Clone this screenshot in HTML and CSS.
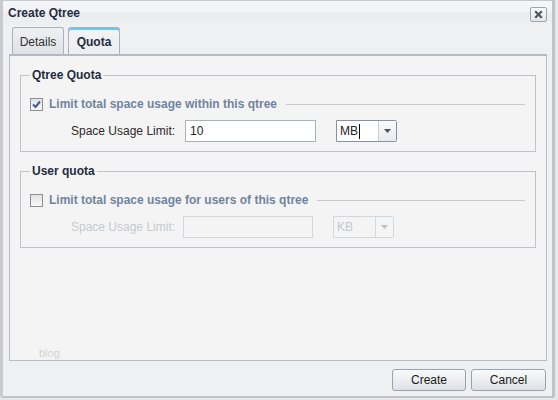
FILE: index.html
```html
<!DOCTYPE html>
<html>
<head>
<meta charset="utf-8">
<title>Create Qtree</title>
<link rel="stylesheet" href="styles.css">
</head>
<body>
<div class="window">
  <div class="titlebar">
    <span class="title">Create Qtree</span>
    <span class="close"><svg width="9" height="9" viewBox="0 0 9 9"><path d="M1.2 1.2 L7.8 7.8 M7.8 1.2 L1.2 7.8" stroke="#4f5761" stroke-width="2.2" fill="none"/></svg></span>
  </div>
  <div class="tabs">
    <div class="tab">Details</div>
    <div class="tab tab--active">Quota</div>
  </div>
  <div class="panel">
    <fieldset class="group">
      <legend>Qtree Quota</legend>
      <div class="check-row">
        <span class="checkbox"><svg width="11" height="11" viewBox="0 0 11 11"><path d="M2 5.5 L4.5 8 L9 2.5" stroke="#3f5d96" stroke-width="2" fill="none"/></svg></span>
        <span class="check-label">Limit total space usage within this qtree</span>
        <span class="rule"></span>
      </div>
      <div class="field-row">
        <span class="field-label">Space Usage Limit:</span>
        <div class="input">10</div>
        <div class="select select--focus">
          <span class="select-value">MB<span class="caret"></span></span>
          <span class="select-btn"><svg width="7" height="4" viewBox="0 0 7 4"><polygon points="0,0 7,0 3.5,4" fill="#4a5563"/></svg></span>
        </div>
      </div>
    </fieldset>
    <fieldset class="group group--disabled">
      <legend>User quota</legend>
      <div class="check-row">
        <span class="checkbox"></span>
        <span class="check-label">Limit total space usage for users of this qtree</span>
        <span class="rule"></span>
      </div>
      <div class="field-row">
        <span class="field-label">Space Usage Limit:</span>
        <div class="input"></div>
        <div class="select">
          <span class="select-value">KB</span>
          <span class="select-btn"><svg width="7" height="4" viewBox="0 0 7 4"><polygon points="0,0 7,0 3.5,4" fill="#b9bfc6"/></svg></span>
        </div>
      </div>
    </fieldset>
    <div class="watermark">blog</div>
  </div>
  <div class="actions">
    <span class="btn btn--create">Create</span>
    <span class="btn btn--cancel">Cancel</span>
  </div>
</div>
</body>
</html>
```
FILE: styles.css
```css
* { box-sizing: border-box; }
html, body { margin: 0; padding: 0; }
body {
  width: 558px;
  height: 400px;
  overflow: hidden;
  background: #e6e7e9;
  font-family: "Liberation Sans", Arial, sans-serif;
  font-size: 12px;
  color: #222;
}
.window {
  width: 555px;
  height: 398px;
  background: #eff0f2;
  border-top: 1px solid #c6c8cc;
  border-left: 3px solid #c9cacd;
  border-right: 3px solid #c0c2c6;
  border-bottom: 2px solid #c0c2c6;
  border-radius: 0 0 3px 3px;
  padding: 0 5px 0 6px;
  display: flex;
  flex-direction: column;
}
.titlebar {
  margin: 0 -5px 0 -6px;
  height: 26px;
  padding: 5px 5px 0 5px;
  display: flex;
  justify-content: space-between;
  align-items: flex-start;
  background: linear-gradient(#f6f7f8, #f2f3f5 40%, #eaecef 48%, #eff0f2);
}
.title {
  font-weight: bold;
  line-height: 14px;
  color: #1e2c3e;
}
.close {
  margin-top: 1px;
  width: 17px;
  height: 15px;
  border: 1px solid #9ea5ae;
  border-radius: 2px;
  background: linear-gradient(#f8f9fa, #e3e6ea);
  display: flex;
  align-items: center;
  justify-content: center;
}
.close svg { display: block; }
.tabs {
  height: 27px;
  display: flex;
  align-items: flex-end;
  gap: 4px;
  padding-left: 3px;
}
.tab {
  width: 52px;
  height: 27px;
  border: 1px solid #aab2bd;
  border-bottom: none;
  border-radius: 3px 3px 0 0;
  background: linear-gradient(#eef0f2, #dfe2e6);
  display: flex;
  align-items: center;
  justify-content: center;
  line-height: 14px;
  color: #333;
  padding-top: 1px;
}
.tab--active {
  font-weight: bold;
  color: #1e2c3e;
  background: linear-gradient(#f2f3f5, #eceef1);
  box-shadow: inset 0 2px 0 #6ac6ea;
}
.panel {
  height: 307px;
  border: 1px solid #b5bcc6;
  border-top: 2px solid #b3bac4;
  background: #f4f4f4;
  padding: 0 10px;
  display: flex;
  flex-direction: column;
}
.group {
  margin: 12px 0 0 0;
  padding: 0 10px 9px 9px;
  border: 1px solid #bdc3cb;
  min-width: 0;
}
.group legend {
  padding: 0 2px;
  line-height: 14px;
  font-weight: bold;
  color: #1e2c3e;
}
.check-row {
  margin-top: 14px;
  height: 16px;
  display: flex;
  align-items: center;
}
.checkbox {
  width: 13px;
  height: 13px;
  border: 1px solid #8e9093;
  background: linear-gradient(#e2e2e2, #f8f8f8);
  display: flex;
  align-items: center;
  justify-content: center;
}
.checkbox svg { display: block; }
.check-label {
  margin-left: 6px;
  font-weight: bold;
  color: #7084a0;
  white-space: nowrap;
}
.rule {
  flex: 1;
  height: 1px;
  background: #c3c8ce;
  margin-left: 9px;
}
.field-row {
  margin-top: 8px;
  height: 22px;
  display: flex;
  align-items: center;
}
.field-label {
  margin-left: 41px;
  width: 114px;
  color: #2a2a2a;
  white-space: nowrap;
}
.input {
  width: 131px;
  height: 22px;
  border: 1px solid #a9b1bb;
  background: #fff;
  padding-left: 4px;
  line-height: 20px;
  color: #222;
}
.select {
  margin-left: 20px;
  width: 61px;
  height: 22px;
  display: flex;
  border: 1px solid #c2c8cf;
  border-radius: 0 2px 2px 0;
  background: #fff;
}
.select--focus {
  border-color: #8592a3;
}
.select-value {
  flex: 1;
  padding-left: 3px;
  line-height: 20px;
  display: flex;
  align-items: center;
  color: #222;
}
.caret {
  display: inline-block;
  width: 1px;
  height: 15px;
  background: #111;
  margin-left: 1px;
}
.select-btn {
  width: 18px;
  border-left: 1px solid #c7cdd4;
  background: linear-gradient(#fafbfc, #e8ebef);
  display: flex;
  align-items: center;
  justify-content: center;
}
.select-btn svg { display: block; }
.group--disabled .field-label {
  width: 112px;
  color: #c6cacf;
}
.group--disabled .input {
  width: 130px;
  border-color: #d3d7dc;
  background: #f4f4f4;
}
.group--disabled .select {
  border-color: #d3d7dc;
  background: #f4f4f4;
}
.group--disabled .select-value {
  color: #c3c7cc;
}
.group--disabled .select-btn {
  border-left-color: #d6dadf;
  background: #f4f5f6;
}
.watermark {
  margin-top: auto;
  margin-left: 19px;
  margin-bottom: 1px;
  font-size: 11px;
  line-height: 12px;
  color: #d2d2d2;
}
.actions {
  margin-top: 8px;
  display: flex;
  justify-content: flex-end;
  gap: 5px;
  padding-right: 1px;
}
.btn {
  height: 22px;
  border: 1px solid #99a2ad;
  border-radius: 3px;
  background: linear-gradient(#f9fafb, #eceef1 50%, #dde1e6);
  display: flex;
  align-items: center;
  justify-content: center;
  color: #1a1a1a;
}
.btn--create { width: 74px; }
.btn--cancel { width: 75px; }
```
